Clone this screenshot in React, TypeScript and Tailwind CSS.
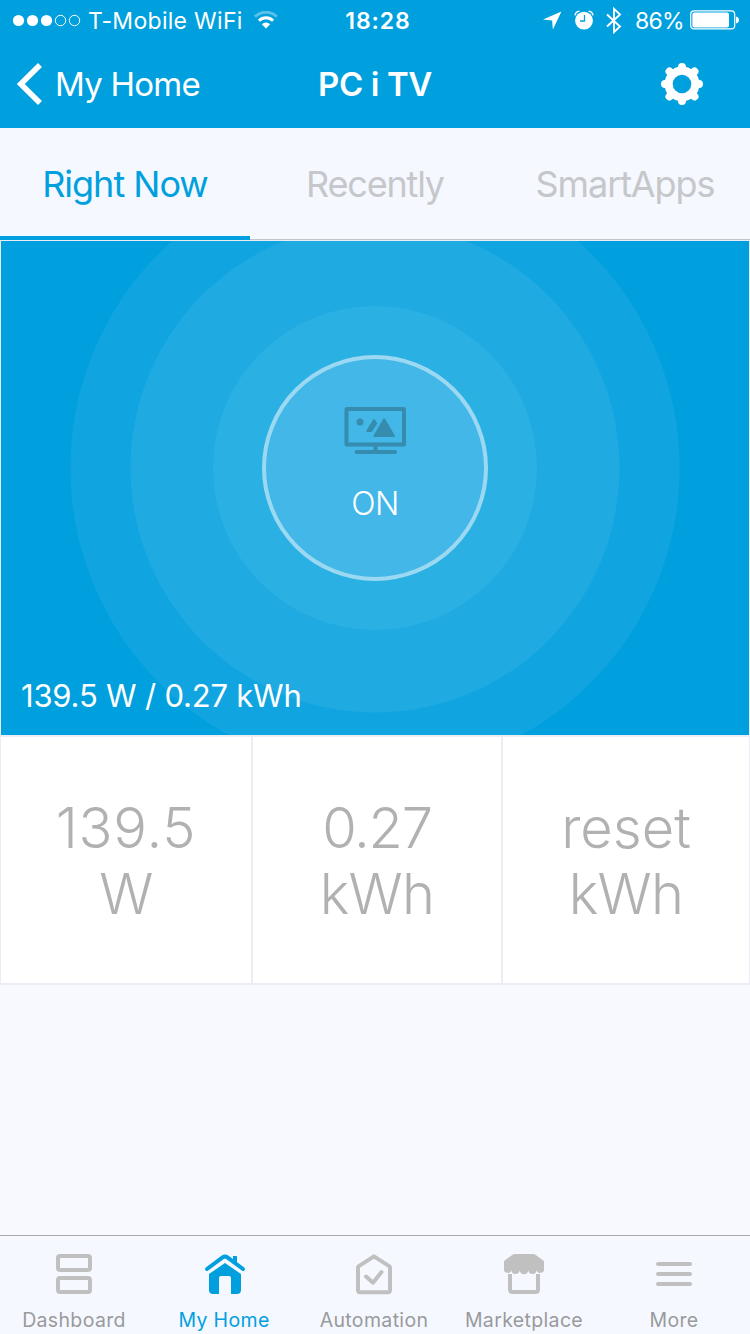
import type { ReactNode } from "react";

const tabs = [
  { label: "Right Now", active: true, spacing: "tracking-[-1px]" },
  { label: "Recently", active: false, spacing: "tracking-[-1.2px]" },
  { label: "SmartApps", active: false, spacing: "tracking-[-1.1px]" },
];

const tiles = [
  { value: "139.5", unit: "W", spacing: "tracking-[0.8px]" },
  { value: "0.27", unit: "kWh", spacing: "tracking-[-1.3px]" },
  { value: "reset", unit: "kWh", spacing: "tracking-normal" },
];

const navItems: { label: string; icon: ReactNode; active?: boolean }[] = [
  { label: "Dashboard", icon: <DashboardIcon /> },
  { label: "My Home", icon: <HomeIcon />, active: true },
  { label: "Automation", icon: <AutomationIcon /> },
  { label: "Marketplace", icon: <MarketIcon /> },
  { label: "More", icon: <MoreIcon /> },
];

export default function App() {
  return (
    <div className="w-[750px] h-[1334px] flex flex-col overflow-hidden bg-[#f8f9ff] font-['Inter','Liberation_Sans',sans-serif]">
      <header className="h-32 bg-[#00a0de] text-white">
        <StatusBar />
        <NavBar />
      </header>
      <Tabs />
      <DevicePanel />
      <Tiles />
      <div className="flex-1" />
      <BottomNav />
    </div>
  );
}

function StatusBar() {
  return (
    <div className="h-10 grid grid-cols-3 items-center text-[23px] leading-none">
      <div className="flex items-center pl-3">
        <svg className="shrink-0" width="70" height="14" viewBox="0 0 70 14" fill="white">
          <circle cx="6.5" cy="7.5" r="5.6" />
          <circle cx="20.5" cy="7.5" r="5.6" />
          <circle cx="34.5" cy="7.5" r="5.6" />
          <circle cx="48.500" cy="7.5" r="5.2" fill="none" stroke="white" />
          <circle cx="62.500" cy="7.5" r="5.2" fill="none" stroke="white" />
        </svg>
        <span className="ml-[6px] pt-0.5 whitespace-nowrap tracking-[0.3px]">T-Mobile WiFi</span>
        <svg className="ml-[11px] shrink-0" width="24" height="18" viewBox="0 0 24 18" fill="none" stroke="white" strokeWidth="3">
          <path d="M1 5.8a15.6 15.6 0 0 1 22 0" opacity="0.35" />
          <path d="M4.900 9.600a10 10 0 0 1 14.200 0" />
          <path d="M12 17.600l4.200-4.300a6 6 0 0 0-8.400 0z" fill="white" stroke="none" />
        </svg>
      </div>
      <div className="text-center pl-[6px] pt-0.5 font-semibold tracking-[0.9px]">18:28</div>
      <div className="flex items-center justify-end pr-[10px]">
        <svg width="19" height="19" viewBox="0 0 19 19" fill="white">
          <path d="M18.400 .5L0 8.600l9.100.8.800 9z" />
        </svg>
        <svg className="ml-[12px]" width="20" height="20" viewBox="0 0 20 20" fill="none">
          <circle cx="10" cy="10.600" r="8.900" fill="white" />
          <path d="M1 5.300Q1.400 1.800 5.400 1.100M14.600 1.100q4 .7 4.400 4.200" stroke="white" strokeWidth="1.400" />
          <path d="M10.500 5v6H6" stroke="#00a0de" strokeWidth="1.300" />
        </svg>
        <svg className="ml-[12px]" width="16" height="28" viewBox="0 0 16 28" fill="none" stroke="white" strokeWidth="1.900">
          <path d="M1 8.500l13 12-6 5.600V2.900l6 5.600-13 12" />
        </svg>
        <span className="ml-[13px] pt-0.5 tracking-[-0.700px]">86%</span>
        <svg className="ml-[6px]" width="50" height="20" viewBox="0 0 50 20">
          <rect x=".7" y=".9" width="44" height="18" rx="3.500" fill="none" stroke="white" strokeWidth="1.200" />
          <rect x="2.400" y="2.400" width="36.600" height="15" rx="2" fill="white" />
          <path d="M46 6.500q3 .8 3 3.500t-3 3.500z" fill="white" />
        </svg>
      </div>
    </div>
  );
}

function NavBar() {
  return (
    <div className="h-[88px] grid grid-cols-3 items-center text-[33px] leading-none">
      <button className="flex items-center pl-4">
        <svg width="26" height="42" viewBox="0 0 26 42" fill="none" stroke="white" strokeWidth="5.600">
          <path d="M24 2L4.800 21 24 40" />
        </svg>
        <span className="ml-[13px] pt-px tracking-[-0.750px]">My Home</span>
      </button>
      <h1 className="text-center pt-px font-semibold tracking-[-0.400px]">PC i TV</h1>
      <button className="justify-self-end mr-[46px]">
        <svg width="44" height="44" viewBox="0 0 44 44">
          <circle cx="22" cy="22" r="13" fill="none" stroke="white" strokeWidth="9" />
          <path
            d="M22 5v34M5 22h34M9.500 9.500l25 25M34.500 9.500l-25 25"
            stroke="white"
            strokeWidth="8"
            strokeLinecap="round"
          />
          <circle cx="22" cy="22" r="9.300" fill="#00a0de" />
        </svg>
      </button>
    </div>
  );
}

function Tabs() {
  return (
    <div className="h-28 grid grid-cols-3 bg-[#f5f8ff]">
      {tabs.map((t) => (
        <button
          key={t.label}
          className={`pt-1 text-[36px] leading-none ${t.spacing} ${
            t.active ? "border-b-4 border-[#00a0de] text-[#00a0de]" : "border-b border-[#c3c5ca] text-[#c6c7cb] pb-[3px]"
          }`}
        >
          {t.label}
        </button>
      ))}
    </div>
  );
}

function DevicePanel() {
  return (
    <div className="h-[495px] border-t border-x border-[#eaedf3]">
      <div className="relative h-full overflow-hidden bg-[#00a0de]">
        {/* signal rings */}
        <svg className="absolute inset-0" width="748" height="494" viewBox="1 241 748 494">
          <circle cx="375" cy="468" r="304.500" fill="#10a5e0" />
          <circle cx="375" cy="468" r="244.500" fill="#1faae2" />
          <circle cx="375" cy="468" r="162" fill="#2bb0e4" />
        </svg>
        <button className="absolute left-[261px] top-[114px] w-[226px] h-[226px] rounded-full border-4 border-[#9bd9f2] bg-[#43b7e7] flex flex-col items-center pt-[48px]">
          <TvIcon />
          <span className="mt-[33px] text-[32px] leading-none font-light tracking-[-0.500px] text-white">ON</span>
        </button>
        <p className="absolute left-5 bottom-[23px] text-[31px] leading-8 tracking-[-0.200px] text-white">139.5 W / 0.27 kWh</p>
      </div>
    </div>
  );
}

function Tiles() {
  return (
    <div className="h-[250px] grid grid-cols-[253px_250px_247px] border-y-2 border-[#eaedf3] bg-white">
      {tiles.map((t, i) => (
        <div
          key={t.value}
          className={`flex flex-col items-center justify-center border-[#eaedf3] pt-0.5 text-[56px] leading-[66px] font-light text-[#b1b1b1] ${
            i === 0 ? "border-l border-r-2" : i === 1 ? "border-r-2" : "border-r"
          }`}
        >
          <span className={t.spacing}>{t.value}</span>
          <span className="tracking-[-0.700px]">{t.unit}</span>
        </div>
      ))}
    </div>
  );
}

function BottomNav() {
  return (
    <nav className="h-[99px] grid grid-cols-5 border-t border-[#a9abb0] bg-[#f5f8ff]">
      {navItems.map((n) => (
        <button
          key={n.label}
          className={`flex flex-col items-center pt-4 pr-0.5 text-[19.5px] leading-none tracking-[0.350px] ${
            n.active ? "text-[#00a0de]" : "text-[#999a9c]"
          }`}
        >
          {n.icon}
          <span className="mt-[15px]">{n.label}</span>
        </button>
      ))}
    </nav>
  );
}

function TvIcon() {
  return (
    <svg width="62" height="48" viewBox="-0.5 0 62 48" fill="#368cae">
      <rect x="2" y="2" width="57.500" height="35.500" rx="0.500" fill="none" stroke="#368cae" strokeWidth="4" />
      <circle cx="15.500" cy="15" r="3.500" />
      <path d="M28.800 12.600L22.200 23q-1 2 .8 2h4.200l5.600-8.600-2.600-3.900q-.7-.9-1.400.1z" />
      <path d="M38.700 12L29.400 28q-1 2 .9 2h18.800q1.900 0 .9-2l-9.400-16q-.9-1.400-1.900 0z" />
      <path d="M29 39h4v4h-4z" />
      <path d="M12 45h38.500" stroke="#368cae" strokeWidth="4" strokeLinecap="round" />
    </svg>
  );
}

function DashboardIcon() {
  return (
    <svg width="44" height="44" viewBox="0 0 44 44" fill="none" stroke="#c0c0c1" strokeWidth="4">
      <rect x="6" y="4" width="32" height="14" rx="2" />
      <rect x="6" y="26" width="32" height="14" rx="2" />
    </svg>
  );
}

function HomeIcon() {
  return (
    <svg width="44" height="44" viewBox="-1 0 44 44" fill="#00a0de">
      <path d="M4 17L19.600 5.400q2.400-1.800 4.800 0L40 17" fill="none" stroke="#00a0de" strokeWidth="4" strokeLinecap="round" />
      <path d="M30 4h4v9l-4-3z" />
      <path d="M22 11l16 11V38q0 4-4 4h-6V26q0-2-2-2h-8q-2 0-2 2v16h-6q-4 0-4-4V22z" />
    </svg>
  );
}

function AutomationIcon() {
  return (
    <svg width="44" height="44" viewBox="0 0 44 44" fill="none" stroke="#c0c0c1" strokeWidth="4" strokeLinejoin="round">
      <path d="M22 4.400L6.500 14.400Q6 14.800 6 15.500V38q0 2.200 2.200 2.200h27.600Q38 40.200 38 38V15.500q0-.7-.5-1.100z" />
      <path d="M14 24.500l7 6.200L29.500 20" strokeLinecap="round" />
    </svg>
  );
}

function MarketIcon() {
  return (
    <svg width="44" height="44" viewBox="0 0 44 44" fill="#c0c0c1">
      <path d="M13.500 2h17q2 0 3.600 1.200L42 9v7.500a3.700 3.700 0 0 1-7.400 1.300 3.700 3.700 0 0 1-8.200 0 4.200 4.200 0 0 1-8.800 0 3.700 3.700 0 0 1-8.200 0A3.700 3.700 0 0 1 2 16.500V9l7.900-5.800Q11.500 2 13.500 2z" />
      <path d="M8 22v15.500Q8 40 10.500 40h23q2.500 0 2.500-2.500V22" fill="none" stroke="#c0c0c1" strokeWidth="4" />
    </svg>
  );
}

function MoreIcon() {
  return (
    <svg width="44" height="44" viewBox="0 0 44 44" stroke="#c0c0c1" strokeWidth="4" strokeLinecap="round">
      <path d="M6 12h32M6 22h32M6 32h32" />
    </svg>
  );
}
